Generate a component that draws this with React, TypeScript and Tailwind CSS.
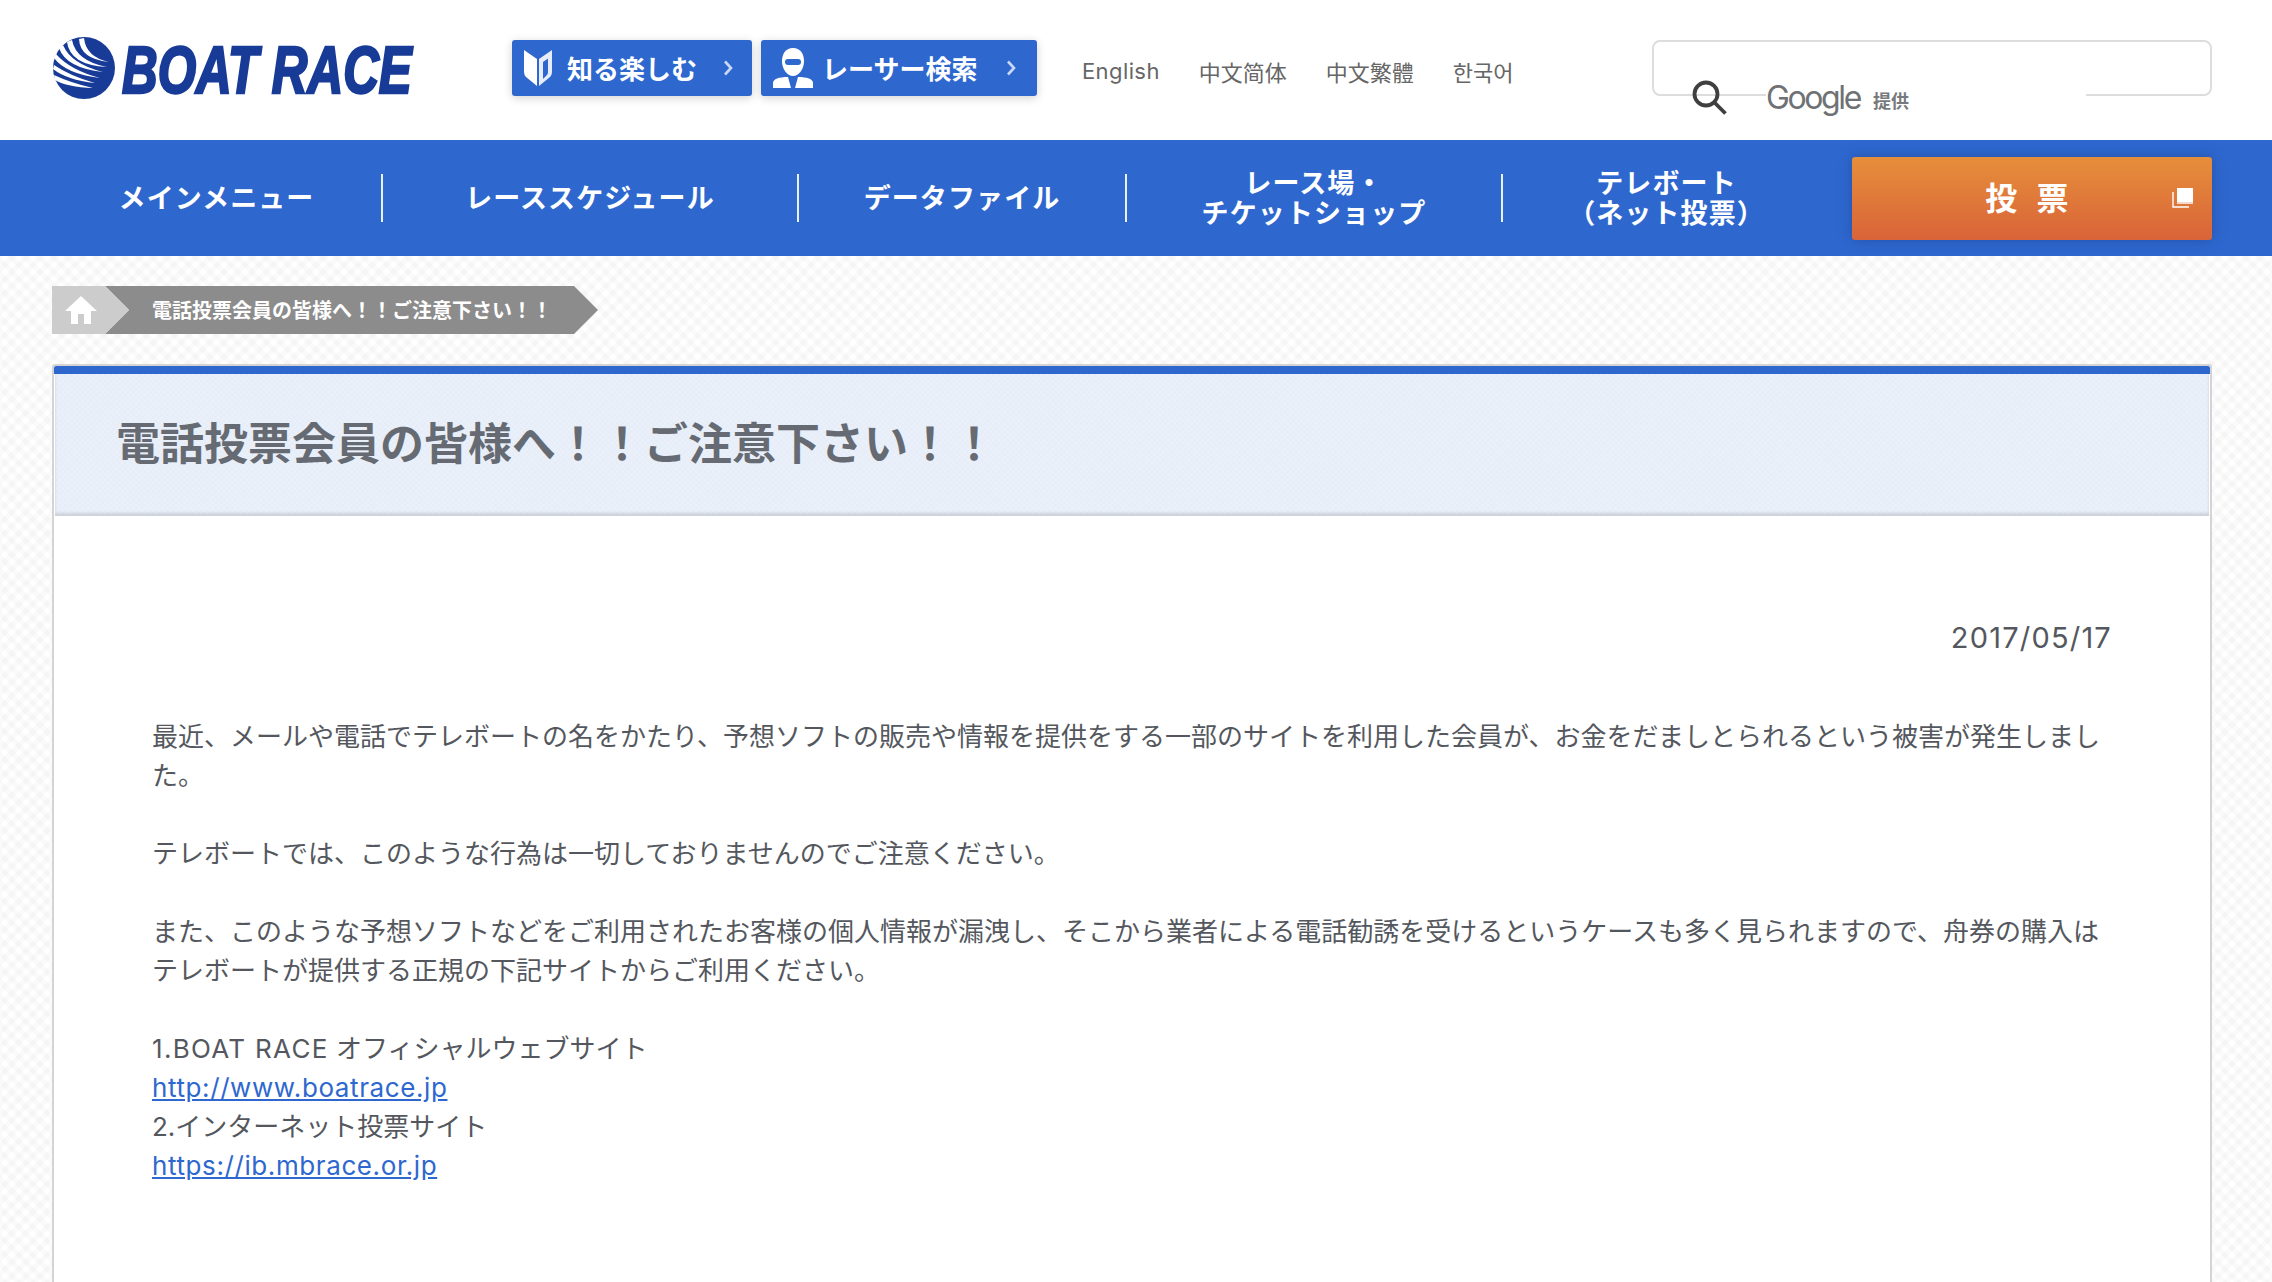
const navItems = [
  { label: "メインメニュー", width: "w-[331px]" },
  { label: "レーススケジュール", width: "w-[416px]" },
  { label: "データファイル", width: "w-[328px]" },
  { label: "レース場・\nチケットショップ", width: "w-[376px]" },
  { label: "テレボート\n（ネット投票）", width: "w-[327px]" },
];

const langs = ["English", "中文简体", "中文繁體", "한국어"];

function BoatRaceLogo() {
  return (
    <svg width="362" height="64" viewBox="0 0 362 64" className="shrink-0 overflow-visible">
      <circle cx="32" cy="32" r="31" fill="#173b96" />
      <g fill="#ffffff" transform="translate(1 1)">
        <path d="M26 2 Q27 22 56 25 Q33 20 31 1 Z" />
        <path d="M14 5 Q17 28 54 30 Q23 24 19 3 Z" />
        <path d="M6 11 Q13 31 50 35 Q18 27 10 8 Z" />
        <path d="M1 21 Q13 37 47 41 Q17 33 3 17 Z" />
        <path d="M0 32 Q14 43 42 46 Q17 39 1 28 Z" />
        <path d="M2 43 Q14 50 40 51 Q18 46 1 38 Z" />
      </g>
      <text
        transform="translate(70 57) scale(0.748 1)"
        fontFamily="Liberation Sans"
        fontStyle="italic"
        fontWeight="700"
        fontSize="66"
        fill="#173b96"
        stroke="#173b96"
        strokeWidth="2.6"
      >
        BOAT RACE
      </text>
    </svg>
  );
}

function ShieldIcon() {
  return (
    <svg width="28" height="36" viewBox="0 0 28 36" className="shrink-0">
      <path d="M0 0 L13 9 V36 L2 27 Q0 25 0 22 Z" fill="#ffffff" />
      <path d="M28 0 L15 9 V36 L26 27 Q28 25 28 22 Z" fill="#e6edf9" />
      <path d="M19 12 L24 8.5 V22 Q24 24 23 25 L19 29 Z" fill="#2e68cf" />
    </svg>
  );
}

function RacerIcon() {
  return (
    <svg width="40" height="40" viewBox="0 0 40 40" className="shrink-0">
      <path
        d="M20 0 C28 0 31 7 31 13 C31 21 26 28 20 28 C14 28 9 21 9 13 C9 7 12 0 20 0 Z"
        fill="#ffffff"
      />
      <rect x="12" y="11" width="16" height="6" rx="3" fill="#2e68cf" />
      <path d="M0 40 V35 C0 31 6 29 15 29 L18 40 Z" fill="#ffffff" />
      <path d="M40 40 V35 C40 31 34 29 25 29 L22 40 Z" fill="#ffffff" />
    </svg>
  );
}

function Chevron() {
  return (
    <svg width="10" height="16" viewBox="0 0 10 16" className="shrink-0">
      <path d="M2 1.5 L8 8 L2 14.5" fill="none" stroke="#c9d8f3" strokeWidth="2.6" />
    </svg>
  );
}

function MagnifierIcon() {
  return (
    <svg width="36" height="36" viewBox="0 0 36 36">
      <circle cx="14" cy="14" r="11.5" fill="none" stroke="#3f3f3f" strokeWidth="3.8" />
      <path d="M22 22 L33.5 33.5" stroke="#3f3f3f" strokeWidth="3.8" />
    </svg>
  );
}

function HomeIcon() {
  return (
    <svg width="32" height="28" viewBox="0 0 32 28">
      <path d="M16 0 L32 15 H26 V28 H19 V18 H13 V28 H6 V15 H0 Z" fill="#ffffff" />
    </svg>
  );
}

function WindowIcon() {
  return (
    <svg width="21" height="20" viewBox="0 0 21 20">
      <path d="M1 4 V19 H17" fill="none" stroke="#ffffff" strokeWidth="1.4" />
      <rect x="5" y="0" width="16" height="14" fill="#ffffff" />
      <rect x="5" y="14" width="16" height="2" fill="#f3d9cb" />
    </svg>
  );
}

function Header() {
  return (
    <header className="flex h-[140px] items-center bg-white pb-1 pl-[52px] pr-[60px]">
      <BoatRaceLogo />
      <div className="ml-[98px] flex gap-[9px]">
        <a className="flex h-14 w-[240px] items-center rounded-[3px] bg-[#2e68cf] pl-3 shadow-[0_2px_10px_rgba(0,0,0,0.18)]">
          <ShieldIcon />
          <span className="ml-[15px] pb-[2px] text-[26px] font-bold text-white">知る楽しむ</span>
          <span className="ml-[26px]"><Chevron /></span>
        </a>
        <a className="flex h-14 w-[276px] items-center rounded-[3px] bg-[#2e68cf] pl-3 shadow-[0_2px_10px_rgba(0,0,0,0.18)]">
          <RacerIcon />
          <span className="ml-[9px] pb-[2px] text-[26px] font-bold text-white">レーサー検索</span>
          <span className="ml-[29px]"><Chevron /></span>
        </a>
      </div>
      <div className="ml-[45px] flex gap-[39px] pt-[7px] text-[22px] text-[#666666]">
        {langs.map((lang) => (
          <span key={lang} className="first:font-['Inter',sans-serif] first:tracking-[0.4px]">{lang}</span>
        ))}
      </div>
      <div className="relative ml-auto h-14 w-[560px] rounded-[8px] border-2 border-[#dddddd]">
        <div className="absolute left-[38px] top-[38px]">
          <MagnifierIcon />
        </div>
        <div className="absolute left-[112px] top-[40px] flex h-[36px] w-[320px] items-center bg-white pb-1">
          <span className="font-['Inter',sans-serif] text-[32px] tracking-[-2.4px] text-[#6f7175]">Google</span>
          <span className="ml-[13px] mt-[4px] text-[18px] font-bold text-[#77797d]">提供</span>
        </div>
      </div>
    </header>
  );
}

function NavBar() {
  return (
    <nav className="flex h-[116px] items-center bg-[#2e68cf] pl-[52px] pr-[60px]">
      <div className="flex">
        {navItems.map((item, i) => (
          <a
            key={item.label}
            className={`flex h-12 items-center justify-center whitespace-pre-line pb-[2px] text-center text-[27px] font-bold leading-[30px] tracking-[1.1px] text-white ${item.width} ${
              i < 4 ? "border-r-2 border-white/90" : ""
            }`}
          >
            {item.label}
          </a>
        ))}
      </div>
      <a className="relative ml-auto flex h-[83px] w-[360px] items-center justify-center rounded-[3px] bg-gradient-to-b from-[#e68e3b] to-[#d96338] pb-1 pr-[4px] text-[32px] font-bold tracking-[6px] text-white shadow-[0_0_14px_rgba(20,40,100,0.35)]">
        投 票
        <span className="absolute right-[19px] top-[31px]">
          <WindowIcon />
        </span>
      </a>
    </nav>
  );
}

function Breadcrumb() {
  return (
    <div className="flex h-12 items-stretch">
      <div className="relative z-10 flex w-[77px] items-center bg-[#cccccc] pl-[13px] [clip-path:polygon(0_0,53px_0,77px_50%,53px_100%,0_100%)]">
        <HomeIcon />
      </div>
      <div className="-ml-[26px] flex w-[495px] items-center bg-[#8c8c8c] pl-[49px] text-[20px] font-bold text-white [clip-path:polygon(2px_0,471px_0,100%_50%,471px_100%,2px_100%,26px_50%)]">
        電話投票会員の皆様へ！！ご注意下さい！！
      </div>
    </div>
  );
}

function Notice() {
  return (
    <section className="mt-[30px] h-[918px] rounded-t-[3px] border-x-2 border-t-2 border-[#d4d4d4] bg-white">
      <div className="h-2 rounded-t-[2px] bg-[#2e68cf]" />
      <div className="mx-px flex h-[142px] items-center bg-[#e6edf8] bg-[repeating-linear-gradient(45deg,rgba(255,255,255,0.1)_0_2px,transparent_2px_4px),repeating-linear-gradient(-45deg,rgba(255,255,255,0.1)_0_2px,transparent_2px_4px)] pb-2 pl-[61px] shadow-[inset_0_-3px_3px_rgba(0,0,0,0.12)]">
        <h1 className="text-[44px] font-bold text-[#666b73]">電話投票会員の皆様へ！！ご注意下さい！！</h1>
      </div>
      <div className="px-[98px] pt-[102px] font-['Inter','Noto_Sans_CJK_JP',sans-serif] text-[26px] leading-[39px] text-[#54585e]">
        <p className="text-right text-[29px] tracking-[1.2px]">2017/05/17</p>
        <p className="mt-[60px]">
          最近、メールや電話でテレボートの名をかたり、予想ソフトの販売や情報を提供をする一部のサイトを利用した会員が、お金をだましとられるという被害が発生しました。
        </p>
        <p className="mt-[39px]">テレボートでは、このような行為は一切しておりませんのでご注意ください。</p>
        <p className="mt-[39px]">
          また、このような予想ソフトなどをご利用されたお客様の個人情報が漏洩し、そこから業者による電話勧誘を受けるというケースも多く見られますので、舟券の購入はテレボートが提供する正規の下記サイトからご利用ください。
        </p>
        <p className="mt-[39px]"><span className="tracking-[1.3px]">1.BOAT RACE</span> オフィシャルウェブサイト</p>
        <p><a className="tracking-[0.6px] text-[#2e68cf] underline">http://www.boatrace.jp</a></p>
        <p>2.インターネット投票サイト</p>
        <p><a className="tracking-[0.6px] text-[#2e68cf] underline">https://ib.mbrace.or.jp</a></p>
      </div>
    </section>
  );
}

export default function App() {
  return (
    <div className="h-[1282px] overflow-hidden bg-white bg-[repeating-linear-gradient(45deg,rgba(0,0,0,0.018)_0_5px,transparent_5px_10px),repeating-linear-gradient(-45deg,rgba(0,0,0,0.018)_0_5px,transparent_5px_10px)] font-['Noto_Sans_CJK_JP',sans-serif]">
      <Header />
      <NavBar />
      <main className="pl-[52px] pr-[60px] pt-[30px]">
        <Breadcrumb />
        <Notice />
      </main>
    </div>
  );
}
